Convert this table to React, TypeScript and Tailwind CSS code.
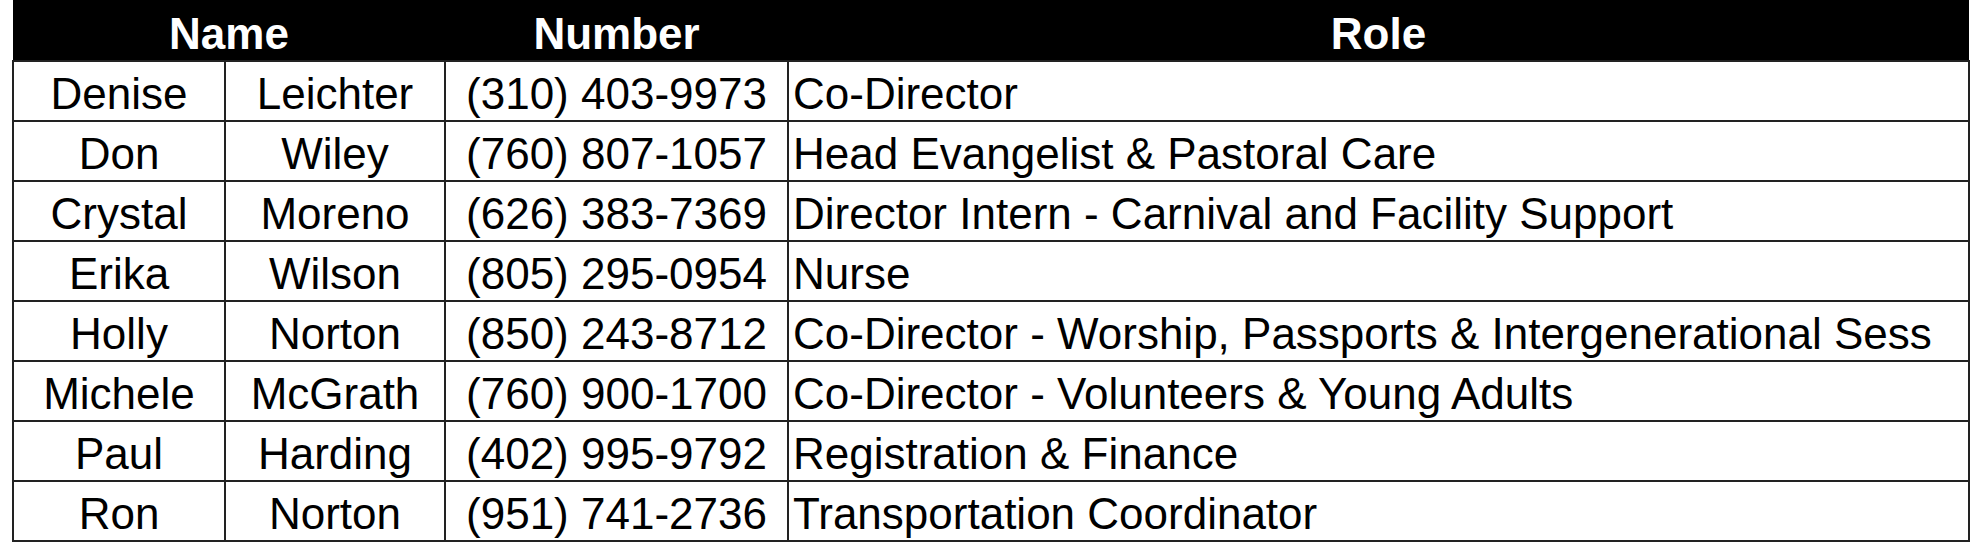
import React from "react";

type Person = {
  first: string;
  last: string;
  phone: string;
  role: string;
};

const PEOPLE: Person[] = [
  { first: "Denise", last: "Leichter", phone: "(310) 403-9973", role: "Co-Director" },
  { first: "Don", last: "Wiley", phone: "(760) 807-1057", role: "Head Evangelist & Pastoral Care" },
  { first: "Crystal", last: "Moreno", phone: "(626) 383-7369", role: "Director Intern - Carnival and Facility Support" },
  { first: "Erika", last: "Wilson", phone: "(805) 295-0954", role: "Nurse" },
  { first: "Holly", last: "Norton", phone: "(850) 243-8712", role: "Co-Director - Worship, Passports & Intergenerational Sess" },
  { first: "Michele", last: "McGrath", phone: "(760) 900-1700", role: "Co-Director - Volunteers & Young Adults" },
  { first: "Paul", last: "Harding", phone: "(402) 995-9792", role: "Registration & Finance" },
  { first: "Ron", last: "Norton", phone: "(951) 741-2736", role: "Transportation Coordinator" },
];

const cell = "border-2 border-[#222] p-0 pt-[5px] align-middle whitespace-nowrap overflow-hidden";

export default function App() {
  return (
    <div className="bg-white w-[1982px] h-[545px] pl-[12px] font-['Liberation_Sans',Arial,sans-serif] text-[44px] leading-none text-black">
      <table className="table-fixed border-collapse w-[1958px]">
        <colgroup>
          <col className="w-[212px]" />
          <col className="w-[220px]" />
          <col className="w-[343px]" />
          <col />
        </colgroup>
        <thead>
          <tr className="bg-black text-white h-[61px]">
            <th colSpan={2} className="font-bold text-center pt-[8px] border-b-2 border-b-[#222]">
              Name
            </th>
            <th className="font-bold text-center pt-[8px] border-b-2 border-b-[#222]">Number</th>
            <th className="font-bold text-center pt-[8px] border-b-2 border-b-[#222]">Role</th>
          </tr>
        </thead>
        <tbody>
          {PEOPLE.map((p) => (
            <tr key={p.phone} className="h-[60px]">
              <td className={`${cell} text-center`}>{p.first}</td>
              <td className={`${cell} text-center`}>{p.last}</td>
              <td className={`${cell} text-center`}>{p.phone}</td>
              <td className={`${cell} text-left pl-[4px]`}>{p.role}</td>
            </tr>
          ))}
        </tbody>
      </table>
    </div>
  );
}
